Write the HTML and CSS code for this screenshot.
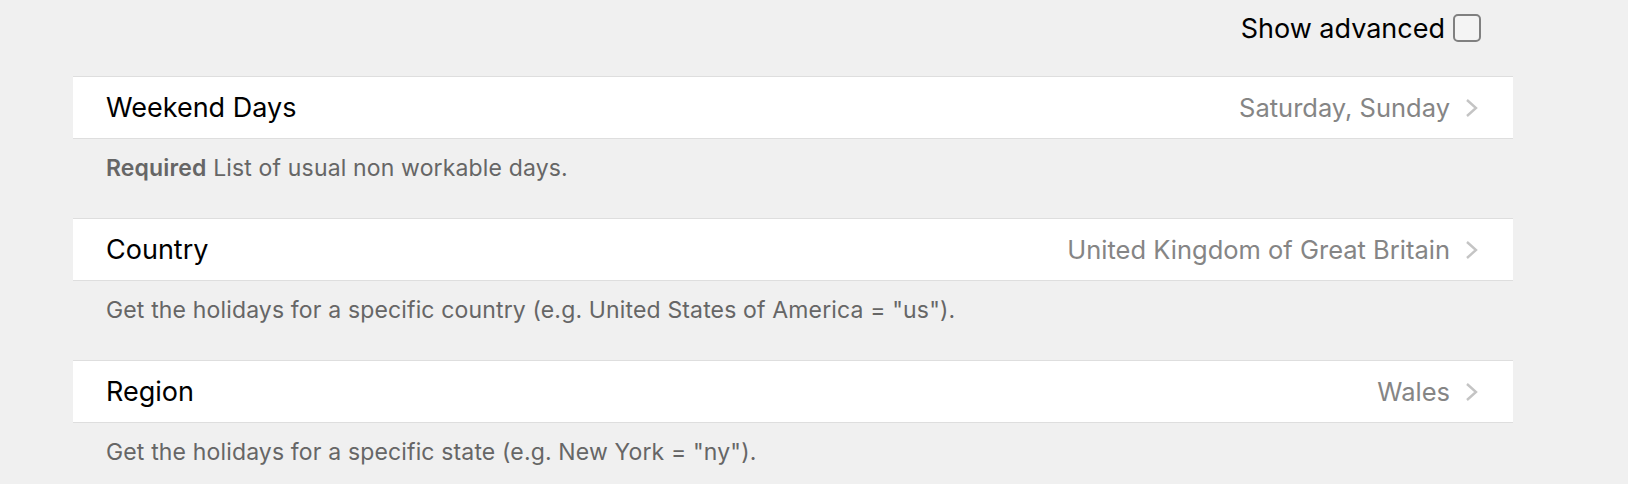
FILE: index.html
```html
<!doctype html>
<html lang="en">
  <head>
    <meta charset="UTF-8" />
    <title>Holiday Settings</title>
    <link rel="stylesheet" href="styles.css">
  </head>
  <body>
    <div class="toolbar">
      <label class="advanced">
        Show advanced
        <span class="checkbox"></span>
      </label>
    </div>

    <div class="settings">
      <div class="row">
        <span class="row-label">Weekend Days</span>
        <span class="row-value">Saturday, Sunday</span>
        <svg class="chevron" viewBox="0 0 13 20"><path d="M2 2 L11 10 L2 18" /></svg>
      </div>
      <div class="hint"><b>Required</b> List of usual non workable days.</div>

      <div class="row">
        <span class="row-label">Country</span>
        <span class="row-value">United Kingdom of Great Britain</span>
        <svg class="chevron" viewBox="0 0 13 20"><path d="M2 2 L11 10 L2 18" /></svg>
      </div>
      <div class="hint">Get the holidays for a specific country (e.g. United States of America = "us").</div>

      <div class="row">
        <span class="row-label">Region</span>
        <span class="row-value">Wales</span>
        <svg class="chevron" viewBox="0 0 13 20"><path d="M2 2 L11 10 L2 18" /></svg>
      </div>
      <div class="hint">Get the holidays for a specific state (e.g. New York = "ny").</div>
    </div>
  </body>
</html>
```

FILE: styles.css
```css
body {
  margin: 0;
  font-family: Inter, 'Noto Sans', sans-serif;
  background-color: #f0f0f0;
  color: #000;
}

.toolbar {
  display: flex;
  justify-content: flex-end;
  height: 76px;
  padding-right: 147px;
  box-sizing: border-box;
}

.advanced {
  display: flex;
  align-items: center;
  gap: 8px;
  height: 56px;
  font-size: 27px;
}

.checkbox {
  width: 28px;
  height: 28px;
  border: 2px solid #808080;
  border-radius: 5px;
  box-sizing: border-box;
  background-color: #f4f4f4;
}

.settings {
  margin-left: 73px;
  width: 1440px;
}

.row {
  display: flex;
  align-items: center;
  height: 63px;
  padding: 0 35px 0 33px;
  background-color: #fff;
  border-top: 1px solid #dedede;
  border-bottom: 1px solid #dedede;
  box-sizing: border-box;
}

.row-label {
  flex: 1;
  font-size: 27px;
}

.row-value {
  font-size: 25.5px;
  color: #858585;
  margin-right: 15px;
}

.chevron {
  width: 13px;
  height: 20px;
  fill: none;
  stroke: #c4c4c4;
  stroke-width: 2.4;
}

.hint {
  padding: 14px 32px 35px 33px;
  font-size: 23px;
  line-height: 30px;
  letter-spacing: 0.15px;
  color: #666;
}

.hint b {
  font-weight: 600;
}
```
